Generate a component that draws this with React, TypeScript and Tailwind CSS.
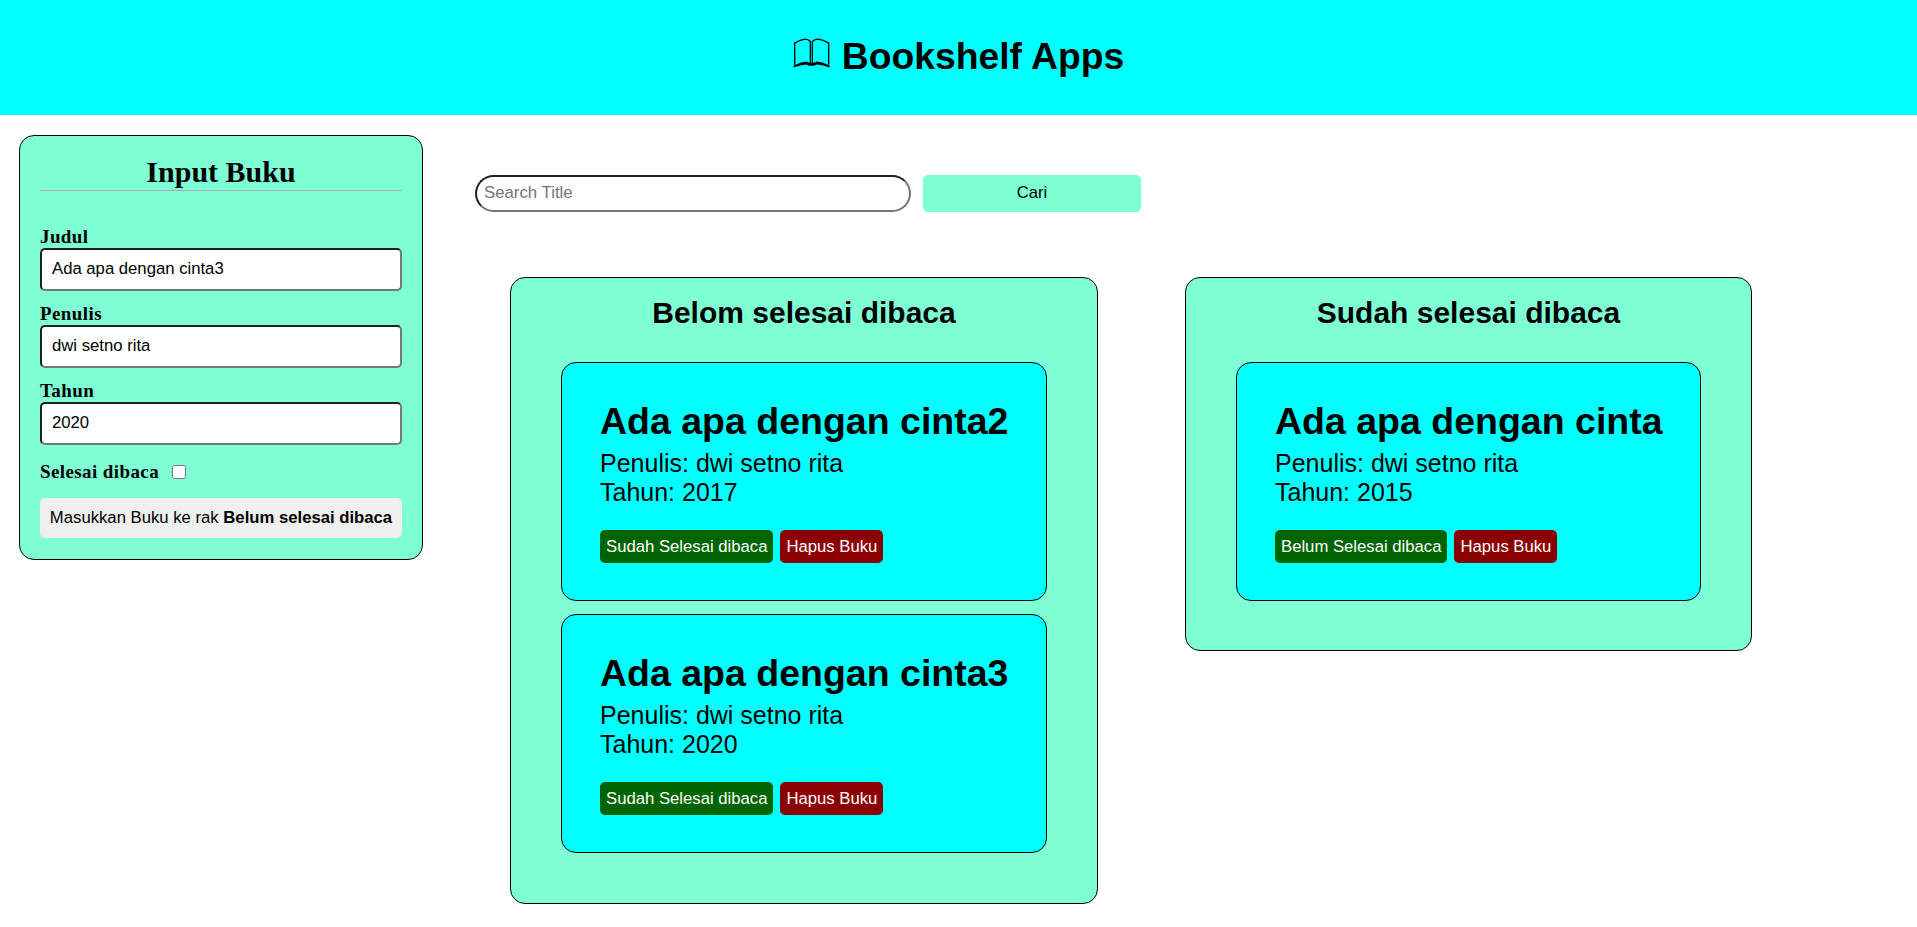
const arial = "[font-family:'Liberation_Sans',Arial,sans-serif]";

function BookGlyph() {
  return (
    <svg width="37" height="32" viewBox="26 20 111 95" className="mr-[12px] -mt-[10px] shrink-0" aria-hidden="true">
      <path d="M31 103 L31 38 Q48 28 62 26 Q72 26 78 33 L78 100" fill="none" stroke="#000" strokeWidth="4" />
      <path d="M133 103 L133 38 Q116 28 102 26 Q92 26 84 33 L84 100" fill="none" stroke="#000" strokeWidth="4" />
      <path d="M28 111 L28 105 Q48 94 66 93 L81 99 L98 93 Q116 94 136 105 L136 111 Q116 103 98 102 L88 106 L74 106 L66 102 Q48 103 28 111 Z" fill="#000" />
    </svg>
  );
}

function Field({ label, value }: { label: string; value: string }) {
  return (
    <div className="mb-[12px]">
      <label className="block font-bold text-[19px] leading-[22px] tracking-[0.4px] text-black">{label}</label>
      <input
        readOnly
        value={value}
        className="block w-full h-[43px] pb-[1px] px-[10px] bg-white rounded-[5px] text-[16.7px] text-black border-2 [border-style:inset] border-[#767676] font-['Liberation_Sans',sans-serif]"
      />
    </div>
  );
}

function BookCard({ title, author, year, toggle, mb }: { title: string; author: string; year: string; toggle: string; mb?: boolean }) {
  return (
    <article className={`h-[239px] box-border border border-black rounded-[15px] bg-[#00ffff] pl-[38px] pt-[36px] ${mb ? "mb-[13px]" : ""}`}>
      <h3 className="font-bold text-[37.5px] leading-[44px] text-black whitespace-nowrap">{title}</h3>
      <p className="text-[25px] leading-[29px] mt-[6px] text-black">Penulis: {author}</p>
      <p className="text-[25px] leading-[29px] text-black">Tahun: {year}</p>
      <div className="flex gap-[7px] mt-[23px]">
        <button className="h-[33px] px-[6px] rounded-[5px] bg-[#006400] text-white text-[16.7px]">{toggle}</button>
        <button className="h-[33px] px-[6px] rounded-[5px] bg-[#8b0000] text-white text-[16.7px]">Hapus Buku</button>
      </div>
    </article>
  );
}

export default function App() {
  return (
    <div className={`bg-white text-black ${arial}`}>
      <header className="h-[115px] bg-[#00ffff] flex items-center justify-center">
        <BookGlyph />
        <h1 className="font-bold text-[37.3px] leading-[44px] -mt-[3px] text-black">Bookshelf Apps</h1>
      </header>
      <div className="flex items-start">
        <aside className="w-[404px] h-[425px] box-border ml-[19px] mt-5 px-5 border border-black rounded-[15px] bg-[#7fffd4] font-['Liberation_Serif',serif]">
          <h2 className="mt-[19px] h-[36px] text-center font-bold text-[30px] leading-[34px] border-b border-[#aaaaaa]">Input Buku</h2>
          <div className="mt-[35px]">
            <Field label="Judul" value="Ada apa dengan cinta3" />
            <Field label="Penulis" value="dwi setno rita" />
            <Field label="Tahun" value="2020" />
          </div>
          <div className="flex items-center mt-[15px] h-[24px]">
            <label className="font-bold text-[19px] tracking-[0.4px]">Selesai dibaca</label>
            <input type="checkbox" className="ml-[13px] w-[14px] h-[14px]" />
          </div>
          <button className="w-full h-[40px] mt-[14px] bg-[#efefef] rounded-[5px] text-[16.7px] whitespace-nowrap text-black font-['Liberation_Sans',sans-serif]">
            Masukkan Buku ke rak <b>Belum selesai dibaca</b>
          </button>
        </aside>
        <main className="ml-[52px]">
          <div className="flex mt-[60px] gap-[12px]">
            <input
              readOnly
              placeholder="Search Title"
              className="w-[436px] h-[37px] px-[7px] pb-[2px] bg-white rounded-[20px] text-[16.8px] border-2 [border-style:inset] border-[#767676] placeholder:text-[#757575]"
            />
            <button className="w-[218px] h-[37px] pb-[1px] rounded-[5px] bg-[#7fffd4] text-[16.6px] text-black">Cari</button>
          </div>
          <div className="flex items-start mt-[65px] ml-[35px] gap-[87px]">
            <section className="w-[588px] h-[627px] box-border border border-black rounded-[15px] bg-[#7fffd4] px-[50px]">
              <h2 className="text-center font-bold text-[30px] leading-[34px] mt-[18px] mb-[32px]">Belom selesai dibaca</h2>
              <BookCard title="Ada apa dengan cinta2" author="dwi setno rita" year="2017" toggle="Sudah Selesai dibaca" mb />
              <BookCard title="Ada apa dengan cinta3" author="dwi setno rita" year="2020" toggle="Sudah Selesai dibaca" />
            </section>
            <section className="w-[567px] h-[374px] box-border border border-black rounded-[15px] bg-[#7fffd4] px-[50px]">
              <h2 className="text-center font-bold text-[30px] leading-[34px] mt-[18px] mb-[32px]">Sudah selesai dibaca</h2>
              <BookCard title="Ada apa dengan cinta" author="dwi setno rita" year="2015" toggle="Belum Selesai dibaca" />
            </section>
          </div>
        </main>
      </div>
    </div>
  );
}
